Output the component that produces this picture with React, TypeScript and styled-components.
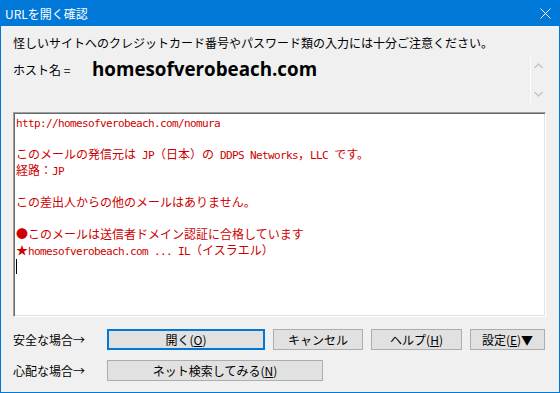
import React from 'react';
import styled, { createGlobalStyle } from 'styled-components';

const GlobalStyle = createGlobalStyle`
  html, body {
    margin: 0;
    padding: 0;
    background: #f0f0f0;
  }
  body {
    font-family: "Noto Sans CJK JP", "Noto Sans", sans-serif;
    font-size: 12px;
    color: #000;
  }
`;

const Window = styled.div`
  width: 560px;
  height: 393px;
  box-sizing: border-box;
  border: 1px solid #0078d7;
  border-top: none;
  display: flex;
  flex-direction: column;
  background: #f0f0f0;
`;

const TitleBar = styled.div`
  height: 26px;
  flex: none;
  background: #0078d7;
  color: #fff;
  display: flex;
  align-items: center;
  justify-content: space-between;
  padding: 0 8px 0 4px;
  font-size: 12px;
`;

const CloseIcon = () => (
  <svg width="11" height="11" viewBox="0 0 11 11">
    <path d="M0.5 0.5 L10.5 10.5 M10.5 0.5 L0.5 10.5" stroke="#fff" strokeWidth="1" fill="none" />
  </svg>
);

const Body = styled.div`
  flex: 1;
  display: flex;
  flex-direction: column;
  padding: 8px 13px 11px 12px;
`;

const Note = styled.div`
  height: 18px;
  line-height: 18px;
  white-space: nowrap;
`;

const HostRow = styled.div`
  margin-top: 5px;
  height: 46px;
  display: flex;
`;

const HostLabel = styled.div`
  width: 79px;
  flex: none;
  line-height: 18px;
  padding-top: 4px;
`;

const HostValue = styled.div`
  flex: 1;
  font-family: "Open Sans", "DejaVu Sans", sans-serif;
  font-weight: 700;
  font-size: 18.8px;
  line-height: 24px;
  color: #000;
`;

const HostScroll = styled.div`
  width: 16px;
  flex: none;
  border-left: 1px solid #fdfdfd;
  display: flex;
  flex-direction: column;
  justify-content: space-between;
  align-items: center;
  padding: 6px 0 6px;
  box-sizing: border-box;
`;

const Chevron = ({ up }: { up?: boolean }) => (
  <svg width="9" height="6" viewBox="0 0 9 6">
    <path
      d={up ? 'M0.5 5 L4.5 1 L8.5 5' : 'M0.5 1 L4.5 5 L8.5 1'}
      stroke="#c5c5c5"
      strokeWidth="1.3"
      fill="none"
    />
  </svg>
);

const InfoBox = styled.div`
  margin-top: 9px;
  height: 205px;
  box-sizing: border-box;
  background: #fff;
  border: 1px solid;
  border-color: #a0a0a0 #fff #fff #a0a0a0;
  box-shadow: inset 1px 1px 0 #696969, inset -1px -1px 0 #e3e3e3;
  padding: 1px 2px 0 2px;
  font-family: "Noto Sans CJK JP", sans-serif;
  font-size: 12px;
  color: #cc0000;
`;

const InfoLine = styled.div`
  height: 16px;
  line-height: 16px;
  white-space: pre;
`;

// half-width run, 6px per character like the dialog's fixed-pitch font
const Half = styled.span`
  font-family: "DejaVu Sans Mono", "Liberation Mono", monospace;
  font-size: 11px;
  letter-spacing: -0.62px;
`;

const Caret = styled.div`
  width: 1px;
  height: 15px;
  background: #000;
  margin-top: 1px;
`;

const Actions = styled.div`
  margin-top: 12px;
  display: flex;
  flex-direction: column;
  gap: 10px;
`;

const ActionRow = styled.div`
  display: flex;
  align-items: center;
  height: 21px;
`;

const RowLabel = styled.div`
  width: 94px;
  flex: none;
  white-space: nowrap;
`;

const Buttons = styled.div`
  display: flex;
  gap: 8px;
`;

const Button = styled.button<{ $w: number; $primary?: boolean }>`
  width: ${(p) => p.$w}px;
  height: 21px;
  box-sizing: border-box;
  margin: 0;
  padding: 0;
  background: #e1e1e1;
  border: ${(p) => (p.$primary ? '2px solid #0078d7' : '1px solid #adadad')};
  font-family: "Noto Sans CJK JP", "Noto Sans", sans-serif;
  font-size: 12px;
  line-height: 17px;
  color: #000;
  white-space: nowrap;
  u {
    text-decoration-thickness: 1px;
    text-underline-offset: 1px;
  }
`;

const lines = [
  'http://homesofverobeach.com/nomura',
  '',
  'このメールの発信元は JP（日本）の DDPS Networks，LLC です。',
  '経路：JP',
  '',
  'この差出人からの他のメールはありません。',
  '',
  '●このメールは送信者ドメイン認証に合格しています',
  '★homesofverobeach.com ... IL（イスラエル）',
];

const splitRuns = (s: string) => s.match(/[\x20-\x7e]+|[^\x20-\x7e]+/g) || [];

export default function App() {
  return (
    <>
      <GlobalStyle />
      <Window>
        <TitleBar>
          <span>URLを開く確認</span>
          <CloseIcon />
        </TitleBar>
        <Body>
          <Note>怪しいサイトへのクレジットカード番号やパスワード類の入力には十分ご注意ください。</Note>
          <HostRow>
            <HostLabel>ホスト名 =</HostLabel>
            <HostValue>homesofverobeach.com</HostValue>
            <HostScroll>
              <Chevron up />
              <Chevron />
            </HostScroll>
          </HostRow>
          <InfoBox>
            {lines.map((l, i) => (
              <InfoLine key={i}>
                {splitRuns(l).map((r, j) =>
                  /^[\x20-\x7e]+$/.test(r) ? <Half key={j}>{r}</Half> : <span key={j}>{r}</span>
                )}
              </InfoLine>
            ))}
            <Caret />
          </InfoBox>
          <Actions>
            <ActionRow>
              <RowLabel>安全な場合→</RowLabel>
              <Buttons>
                <Button $w={158} $primary>
                  開く(<u>O</u>)
                </Button>
                <Button $w={90}>キャンセル</Button>
                <Button $w={91}>
                  ヘルプ(<u>H</u>)
                </Button>
                <Button $w={75}>
                  設定(<u>E</u>)▼
                </Button>
              </Buttons>
            </ActionRow>
            <ActionRow>
              <RowLabel>心配な場合→</RowLabel>
              <Button $w={216}>
                ネット検索してみる(<u>N</u>)
              </Button>
            </ActionRow>
          </Actions>
        </Body>
      </Window>
    </>
  );
}
